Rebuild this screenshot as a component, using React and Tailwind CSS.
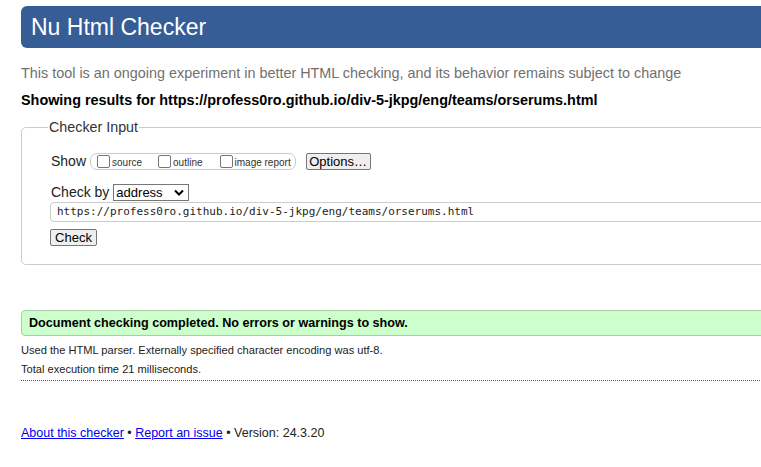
import React from 'react';

const Checkbox = () => (
  <span className="inline-block w-[13px] h-[13px] border border-[#767676] rounded-[2px] bg-white mr-[1px]" />
);

const App = () => {
  return (
    <div className="w-[761px] h-[467px] overflow-hidden bg-white font-['Liberation_Sans',Arial,sans-serif] text-[#222]">
      <div className="w-[860px] pl-[21px] pt-[6px]">
        {/* Header */}
        <h1 className="h-[42px] bg-[#365d95] rounded-l-[6px] pl-[10px] text-white text-[23px] leading-[42px]">
          Nu Html Checker
        </h1>

        <p className="mt-[17px] text-[14.4px] leading-[16px] text-[#707070]">
          This tool is an ongoing experiment in better HTML checking, and its behavior remains subject to change
        </p>
        <p className="mt-[11px] text-[14.4px] leading-[16px] font-bold text-black">
          Showing results for https://profess0ro.github.io/div-5-jkpg/eng/teams/orserums.html
        </p>

        {/* Checker input */}
        <fieldset className="mt-[11px] border border-[#cccccc] rounded-l-[5px] pl-[26px] pb-[15px]">
          <legend className="px-[1px] text-[14.3px] leading-[16px] text-[#333]">Checker Input</legend>

          <div className="ml-[3px] mt-[18px] flex items-center h-[17px]">
            <span className="text-[14px] text-[#222] mr-[4px]">Show</span>
            <div className="flex items-center h-[17px] border border-[#cccccc] rounded-[7px] pl-[6px] pr-[4px] text-[10px] text-[#333]">
              <label className="flex items-end mr-[16px]">
                <Checkbox />
                <span className="leading-[10px] ml-[1px]">source</span>
              </label>
              <label className="flex items-end mr-[17px]">
                <Checkbox />
                <span className="leading-[10px] ml-[1px]">outline</span>
              </label>
              <label className="flex items-end">
                <Checkbox />
                <span className="leading-[10px] ml-[1px]">image report</span>
              </label>
            </div>
            <button className="ml-[10px] h-[17px] w-[65px] border border-[#767676] bg-[#efefef] rounded-[2px] text-[13px] leading-[15px] text-black">
              Options…
            </button>
          </div>

          <div className="ml-[3px] mt-[14px] flex items-center h-[17px]">
            <span className="text-[14px] text-[#222] mr-[4px]">Check by</span>
            <div className="w-[76px] h-[17px] border border-[#767676] flex items-center justify-between pl-[2px] pr-[4px] text-[13px] text-black">
              <span className="leading-[15px]">address</span>
              <svg width="10" height="7" viewBox="0 0 10 7">
                <path d="M1 1.5 L5 5.5 L9 1.5" fill="none" stroke="#000" strokeWidth="2" />
              </svg>
            </div>
          </div>

          <div className="mt-[1px] ml-[2px] h-[20px] border border-[#cccccc] rounded-l-[4px] flex items-center pl-[6px] font-['DejaVu_Sans_Mono',monospace] text-[11px] text-[#222]">
            https://profess0ro.github.io/div-5-jkpg/eng/teams/orserums.html
          </div>

          <button className="mt-[7px] ml-[2px] h-[17px] w-[47px] border border-[#767676] bg-[#efefef] rounded-[2px] text-[13px] leading-[15px] text-black">
            Check
          </button>
        </fieldset>

        {/* Result */}
        <div className="mt-[45px] h-[26px] bg-[#ccffcc] border border-[#aaccaa] rounded-l-[4px] flex items-center pl-[7px] text-[12.6px] font-bold text-black">
          Document checking completed. No errors or warnings to show.
        </div>

        <p className="mt-[8px] text-[11.1px] leading-[13px] text-[#222]">
          Used the HTML parser. Externally specified character encoding was utf-8.
        </p>
        <p className="mt-[6px] text-[11.1px] leading-[13px] text-[#222]">
          Total execution time 21 milliseconds.
        </p>
        <div className="mt-[4px] border-b border-dotted border-[#555]" />

        {/* Footer */}
        <p className="mt-[44px] text-[12.5px] leading-[16px] text-[#222]">
          <a href="#" className="text-[#0000ee] underline">About this checker</a>
          {' • '}
          <a href="#" className="text-[#0000ee] underline">Report an issue</a>
          {' • Version: 24.3.20'}
        </p>
      </div>
    </div>
  );
};

export default App;
